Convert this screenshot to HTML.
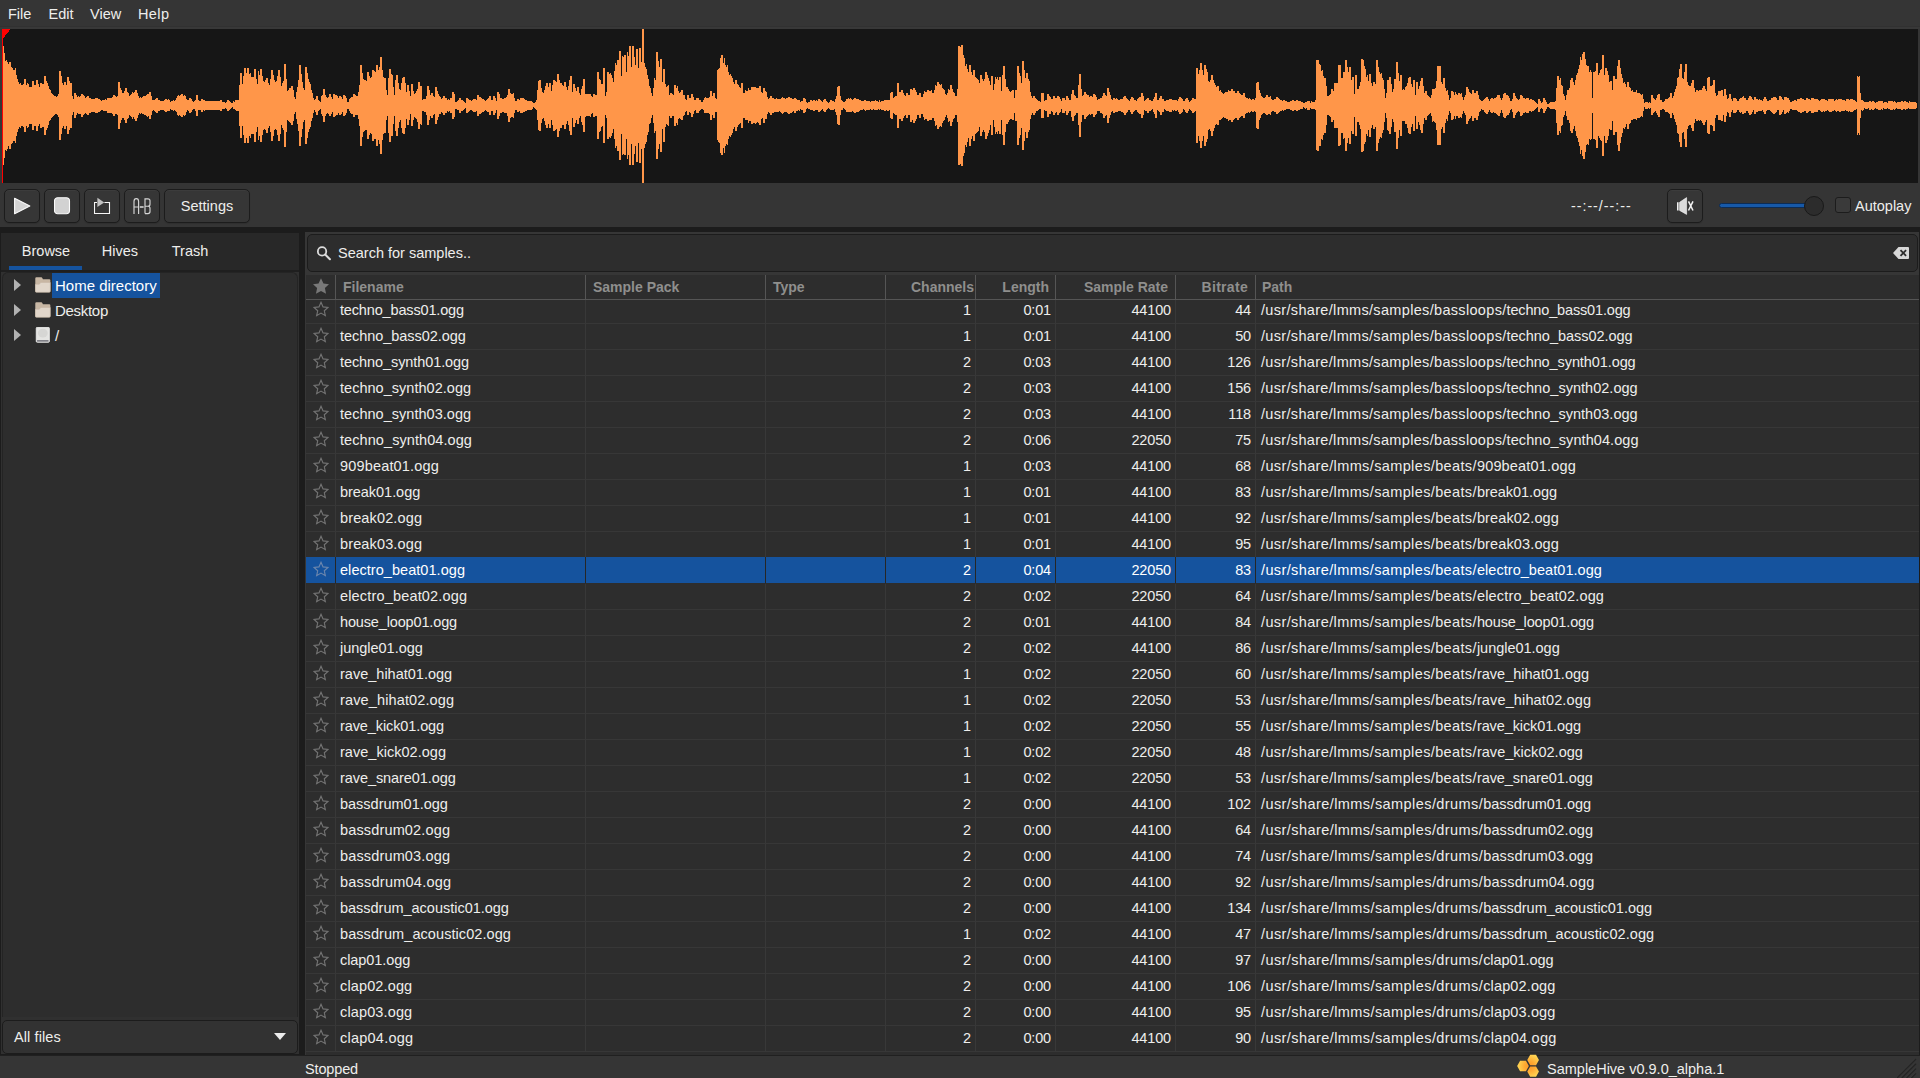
<!DOCTYPE html>
<html lang="en"><head><meta charset="utf-8"><title>SampleHive</title>
<style>
*{box-sizing:border-box;margin:0;padding:0}
html,body{width:1920px;height:1078px;overflow:hidden;background:#353535}
body{position:relative;font-family:"Liberation Sans",sans-serif;font-size:14.200px;color:#eeeeec;line-height:1}
#menubar{position:absolute;left:0;top:0;width:1920px;height:29px;background:#353535}
#menubar b{position:absolute;left:0;top:26px;width:1920px;height:3px;background:#383838;border-top:1px solid #313131}
#menubar span{position:absolute;top:6px;font-size:14.500px;line-height:16px;white-space:nowrap}
#wave{position:absolute;left:2px;top:29px;width:1916px;height:154px;background:#161616;overflow:hidden}
#wave svg{position:absolute;left:0;top:0}
#toolbar{position:absolute;left:0;top:183px;width:1920px;height:44px;background:#353535}
.btn{position:absolute;top:6px;height:34px;border:1px solid #1c1c1c;border-radius:5px;background:#363636;box-shadow:inset 0 1px rgba(255,255,255,0.03),0 1px 1px rgba(0,0,0,0.12)}
.btn svg{position:absolute;left:9px;top:7px}
.btn.txt span{position:absolute;left:0;right:0;top:8px;text-align:center;line-height:16px;font-size:14.500px}
#time{position:absolute;left:1571px;top:15px;line-height:16px;letter-spacing:1px;white-space:nowrap}
#track{position:absolute;left:1719px;top:20px;width:90px;height:5px;border:1px solid #0c2c55;border-radius:3px;background:#1759a8}
#knob{position:absolute;left:1804px;top:13px;width:20px;height:20px;border-radius:50%;border:1px solid #191919;background:#2c2c2c}
#chk{position:absolute;left:1835px;top:14px;width:16px;height:16px;border:1px solid #1c1c1c;border-radius:3px;background:#3a3a3a}
#auto{position:absolute;left:1855px;top:15px;line-height:16px;font-size:14.500px;white-space:nowrap}
#gap{position:absolute;left:0;top:227px;width:1920px;height:828px;background:#1c1c1c}
#left{position:absolute;left:1px;top:233px;width:298px;height:821px;background:#303030}
#tabs{position:absolute;left:0;top:0;width:298px;height:39px;background:#282828;border-bottom:2px solid #1f1f1f}
.tab{position:absolute;top:10px;line-height:16px;text-align:center;font-size:14.500px}
#ul{position:absolute;left:8px;top:33px;width:73px;height:4px;background:#15539e}
#tree{position:absolute;left:1px;top:39px;width:296px;height:745px;background:#2d2d2d;border:1px solid #242424;border-bottom:none;border-radius:6px 6px 0 0}
.ti{position:absolute;left:0;height:25px;width:294px}
.tri{position:absolute;left:11px;top:6px;width:0;height:0;border-left:7px solid #b2b2b2;border-top:6.500px solid transparent;border-bottom:6.500px solid transparent}
.fi{position:absolute;left:32px;top:4px;width:16px;height:16px}
.tl{position:absolute;left:49px;top:0px;height:25px;line-height:26px;padding:0 3px 0 3px;font-size:15px;letter-spacing:0;white-space:nowrap}
.selt{background:#15539e;color:#fff}
#combo{position:absolute;left:1px;top:787px;width:296px;height:34px;border:1px solid #1c1c1c;border-radius:5px;background:#323232}
#combo span{position:absolute;left:11px;top:8px;line-height:16px;font-size:14.500px;letter-spacing:0.100px}
#combo i{position:absolute;left:271px;top:12px;width:0;height:0;border-top:7px solid #ececec;border-left:6.500px solid transparent;border-right:6.500px solid transparent}
#right{position:absolute;left:305px;top:232px;width:1614px;height:823px;background:#363636}
#search{position:absolute;left:2px;top:2px;width:1611px;height:38px;border:1px solid #1c1c1c;border-radius:5px;background:#2d2d2d}
#search svg{position:absolute;left:8px;top:11px}
#search span{position:absolute;left:30px;top:10px;line-height:16px;font-size:14.500px;white-space:nowrap}
#search #clr{left:1585px;top:12px}
#table{position:absolute;left:1px;top:43px;width:1613px;height:780px;background:#2d2d2d;overflow:hidden}
#thead{position:absolute;left:0;top:0;width:1613px;height:25px;background:#2d2d2d;border-bottom:1px solid #555}
.h{position:absolute;top:0;height:24px;line-height:25px;font-weight:bold;color:#8f8f8d;font-size:14px;border-right:1px solid #555;padding:0 7px;white-space:nowrap}
.row{position:absolute;left:0;width:1613px;height:26px;border-bottom:1px solid #373737}
.c{position:absolute;top:0;height:25px;line-height:24px;padding:0 4px;white-space:nowrap;border-right:1px solid #383838;font-size:14.500px;letter-spacing:-0.150px}
.c i{font-style:normal;letter-spacing:0.340px}
.r{text-align:right}
.c0{left:0;width:30px;padding:0}.c1{left:30px;width:250px}.c2{left:280px;width:180px}.c3{left:460px;width:120px}.c4{left:580px;width:90px}.c5{left:670px;width:80px}.c6{left:750px;width:120px}.c7{left:870px;width:80px}.c8{left:950px;width:663px;border-right:none;padding-left:5px}
.h.c8{border-right:none;padding-left:6px}
.st{position:absolute;left:7px;top:3px;width:16px;height:16px}
.row.sel{background:#15539e;color:#fff;border-bottom:none;z-index:2}
.row.sel .c{padding-top:1px;height:26px}
.row.sel .st path{stroke:#6d87ad}
.row.sel .st{top:4px}
.row.sel .c{border-right-color:#262626}
#status{position:absolute;left:0;top:1055px;width:1920px;height:23px;background:#353535;border-top:1px solid #202020}
#stopped{position:absolute;left:305px;top:5px;line-height:16px;font-size:14.500px;letter-spacing:-0.150px}
#logo{position:absolute;left:1515px;top:-2px}
#ver{position:absolute;left:1547px;top:5px;line-height:16px;font-size:14.500px;white-space:nowrap}
#grip{position:absolute;left:1897px;top:2px}

</style></head><body>
<div id="menubar"><b></b><span style="left:8px">File</span><span style="left:48.500px">Edit</span><span style="left:90px">View</span><span style="left:138px;letter-spacing:0.400px">Help</span></div>
<div id="wave"><svg width="1916" height="154" viewBox="0 0 1916 154" shape-rendering="crispEdges"><path d="M1 17H2V24H3V32H4V31H5V33H6V35H7V33H9V38H10V39H11V41H13V39H14V46H15V50H16V53H17V55H18V54H19V56H21V55H22V50H24V56H25V54H26V55H27V58H30V52H32V56H34V51H36V55H37V58H38V54H40V55H42V47H44V52H45V54H46V57H47V60H48V61H49V64H50V65H51V66H52V67H54V68H55V67H56V65H57V42H59V47H60V54H61V56H62V53H64V56H65V48H67V52H68V54H70V67H71V70H72V64H74V66H75V68H76V67H77V68H78V67H79V65H81V66H82V67H83V69H84V68H85V67H87V69H89V70H93V69H96V70H98V71H99V72H100V71H103V70H104V71H105V69H110V68H111V66H113V67H114V68H115V67H116V53H118V59H119V61H120V64H122V62H123V59H125V63H126V64H127V67H128V66H129V65H130V63H131V64H132V63H133V61H135V64H136V67H137V69H138V68H139V69H140V68H141V67H144V66H145V65H147V63H149V67H150V71H153V70H154V69H156V71H158V72H162V71H163V70H165V71H166V70H167V71H168V73H169V72H171V71H172V72H173V71H174V69H175V67H176V66H177V67H178V66H179V65H181V67H182V66H183V67H184V70H185V71H187V69H189V70H190V72H191V73H192V72H193V71H194V66H196V71H197V72H199V70H201V71H203V72H218V71H220V73H223V74H224V73H225V71H227V72H228V73H229V74H231V72H232V73H233V71H237V56H238V44H240V55H241V47H242V39H244V44H245V39H247V45H248V44H249V48H252V40H254V50H255V55H256V42H257V46H258V40H260V47H261V52H262V53H263V51H264V49H266V54H267V56H268V50H269V41H271V46H272V51H273V53H274V52H275V47H276V41H278V48H279V57H280V54H281V52H282V35H284V50H285V62H286V61H287V59H289V57H291V61H292V68H293V70H294V63H295V58H296V51H297V36H299V45H300V53H301V59H302V61H303V38H305V44H306V50H307V53H308V55H309V61H310V64H311V69H312V71H313V70H314V67H316V71H317V72H318V73H319V67H320V66H321V60H323V66H324V68H325V69H326V68H327V65H329V68H330V70H331V65H333V66H335V67H336V69H337V67H339V68H340V70H341V66H343V67H344V69H345V73H347V70H348V69H349V68H351V65H353V66H354V67H356V63H357V56H358V36H360V44H361V50H362V51H364V52H365V43H367V47H368V49H369V48H370V41H372V42H373V43H374V36H376V41H377V38H378V28H380V41H381V48H382V49H384V61H385V66H386V49H387V40H389V45H390V46H391V58H392V66H393V51H394V46H396V54H397V60H398V61H399V54H400V49H401V48H403V54H404V63H405V56H407V62H408V67H409V55H411V62H412V65H413V64H414V62H415V60H416V53H418V57H420V71H421V70H424V67H425V57H427V61H428V66H429V64H431V67H432V68H433V58H435V62H436V65H437V67H438V68H439V70H440V69H441V67H443V69H445V71H446V70H447V71H448V69H450V63H452V65H453V73H455V72H456V71H457V69H459V71H461V72H462V73H463V74H464V69H466V70H467V71H469V72H470V71H471V70H474V71H475V66H477V68H479V69H480V70H482V71H483V72H484V71H485V70H486V69H487V67H489V71H491V67H493V69H494V72H495V63H497V65H498V69H500V70H502V69H504V68H505V66H506V60H508V64H509V65H511V64H512V69H513V72H515V70H517V71H518V69H522V70H523V71H525V72H530V73H531V74H533V73H534V71H535V61H536V52H537V51H539V59H540V63H541V64H542V61H543V57H544V54H546V58H547V54H549V62H550V56H551V51H553V52H554V53H555V45H557V51H558V54H560V56H561V57H562V53H564V58H565V61H566V57H567V51H568V47H570V63H571V55H573V59H574V62H575V58H577V64H578V66H579V60H580V57H581V50H583V65H589V67H590V68H591V65H593V66H595V43H597V50H598V51H599V55H601V39H603V67H604V63H605V43H607V45H608V44H609V46H610V49H611V53H612V42H613V34H614V36H615V31H617V22H619V47H620V27H621V28H622V26H624V43H625V23H626V27H627V17H629V38H630V17H632V28H633V36H634V20H636V39H637V19H639V33H640V0H642V34H643V38H644V40H645V46H646V50H647V57H648V59H649V64H650V67H651V59H652V49H653V51H654V23H656V32H657V38H658V30H660V53H661V40H663V55H664V58H665V57H666V56H667V66H668V64H670V65H671V66H672V56H674V59H675V57H676V62H677V64H678V63H679V61H681V66H683V70H684V71H685V66H687V69H689V65H691V68H692V71H694V69H697V71H699V73H701V71H702V69H703V68H704V69H707V68H708V62H710V67H711V64H713V69H714V70H715V41H716V40H717V39H718V29H719V26H721V34H722V29H723V36H724V38H725V36H726V43H727V46H728V45H729V47H730V49H731V53H732V55H733V51H735V55H736V56H737V58H738V59H739V54H741V64H743V61H744V62H746V59H747V61H749V58H754V59H757V57H759V63H760V64H761V59H763V62H764V63H765V68H766V70H767V69H768V67H770V69H772V70H774V69H775V70H779V69H780V68H781V69H783V70H784V69H786V68H788V69H790V70H792V69H794V70H795V71H798V73H799V72H801V69H803V70H804V73H805V74H806V73H808V71H810V72H811V71H813V72H814V71H815V72H816V70H818V71H819V72H820V73H821V71H822V70H824V72H825V73H826V74H827V73H828V71H830V72H832V73H833V70H834V67H835V58H836V57H838V67H839V71H840V72H841V73H843V72H844V70H846V69H847V70H848V69H849V70H850V71H851V70H852V69H854V70H857V71H859V72H862V71H864V72H868V73H869V72H873V71H874V72H876V73H877V71H878V73H879V72H882V71H888V64H889V63H891V69H892V68H893V67H895V54H897V63H899V61H901V64H902V66H903V67H904V64H906V66H908V60H910V61H911V59H913V61H914V63H915V66H917V64H919V68H921V65H922V62H923V63H925V61H927V62H929V61H930V64H932V61H933V56H934V57H935V53H937V55H938V56H939V55H940V59H941V60H942V61H943V65H944V66H945V64H946V60H947V61H948V56H950V60H951V63H952V64H953V67H955V60H956V17H958V18H959V16H961V26H962V29H963V37H964V35H965V40H966V43H967V36H969V43H970V46H971V41H973V48H974V49H975V50H976V51H977V54H978V46H980V50H981V52H982V50H983V43H985V46H986V49H987V52H988V56H989V47H991V61H992V55H993V48H994V50H995V48H996V51H997V48H999V62H1000V46H1001V37H1003V50H1004V58H1006V60H1007V62H1008V63H1009V62H1010V61H1012V69H1013V61H1015V37H1017V44H1018V47H1019V54H1020V32H1022V41H1023V49H1024V44H1026V50H1027V52H1028V63H1029V67H1030V69H1031V67H1033V69H1034V70H1035V71H1036V72H1038V73H1039V64H1042V72H1043V71H1045V65H1047V67H1048V68H1049V70H1051V67H1053V69H1055V67H1057V68H1058V70H1059V72H1060V69H1063V71H1064V67H1066V69H1067V71H1069V65H1070V61H1072V66H1073V67H1074V69H1076V56H1077V45H1079V60H1080V67H1081V66H1082V63H1084V65H1085V66H1087V68H1088V67H1090V68H1091V65H1093V66H1094V68H1095V71H1096V70H1098V69H1100V67H1101V64H1103V66H1104V67H1105V59H1107V63H1108V66H1109V70H1110V71H1111V69H1113V70H1114V69H1115V70H1116V71H1118V70H1121V68H1122V67H1124V69H1125V70H1126V71H1127V72H1128V70H1129V68H1131V69H1132V71H1134V72H1135V70H1136V69H1137V68H1139V64H1141V67H1142V72H1143V71H1144V70H1145V69H1147V71H1149V72H1151V70H1152V68H1153V64H1155V71H1157V69H1158V67H1160V70H1162V72H1164V71H1167V70H1170V71H1175V72H1176V70H1177V68H1179V69H1180V70H1181V72H1183V70H1184V69H1186V71H1187V73H1188V72H1189V71H1190V69H1192V70H1194V39H1196V45H1197V41H1198V34H1200V41H1201V46H1202V36H1204V40H1205V43H1206V52H1207V53H1208V51H1209V46H1211V51H1212V54H1213V56H1214V58H1215V57H1217V62H1218V61H1219V63H1220V64H1221V65H1222V64H1223V63H1226V61H1227V62H1229V60H1231V62H1233V64H1235V62H1237V64H1238V65H1239V66H1241V64H1243V68H1244V69H1246V70H1247V69H1248V70H1249V71H1250V70H1252V71H1253V69H1254V54H1255V53H1257V61H1258V64H1259V67H1260V68H1261V69H1263V68H1264V66H1266V68H1268V67H1269V70H1270V71H1272V70H1274V68H1276V69H1277V70H1278V71H1280V72H1281V71H1283V72H1285V73H1288V72H1290V71H1292V72H1294V71H1296V72H1299V73H1301V74H1303V73H1305V72H1308V74H1309V72H1310V73H1313V71H1314V31H1317V35H1318V36H1319V42H1320V41H1321V47H1322V49H1324V57H1325V67H1327V66H1328V65H1329V60H1331V62H1332V54H1336V36H1339V49H1341V43H1343V31H1345V38H1346V43H1347V38H1349V51H1350V48H1352V65H1353V46H1355V60H1357V57H1358V53H1359V30H1361V31H1362V37H1363V40H1364V48H1365V46H1366V52H1367V45H1369V54H1370V57H1371V53H1373V55H1374V31H1376V38H1377V43H1378V45H1379V44H1380V49H1381V51H1382V60H1383V69H1384V64H1385V51H1387V48H1389V55H1390V63H1391V60H1392V50H1394V33H1396V44H1397V52H1398V46H1400V61H1401V60H1402V61H1403V58H1404V57H1405V54H1406V49H1407V48H1409V55H1410V58H1411V51H1413V66H1414V53H1416V60H1417V57H1418V52H1419V49H1421V57H1422V64H1423V62H1425V66H1426V67H1427V68H1428V69H1429V66H1430V60H1433V59H1434V52H1435V37H1439V53H1440V55H1441V49H1443V59H1444V62H1445V61H1446V66H1447V71H1448V69H1449V62H1451V63H1452V66H1453V63H1454V65H1455V66H1456V64H1458V65H1459V64H1460V68H1461V71H1462V68H1463V66H1464V58H1466V60H1467V63H1468V64H1469V65H1470V61H1472V64H1474V62H1476V66H1477V70H1478V71H1479V72H1481V71H1482V70H1483V69H1484V68H1486V70H1487V72H1488V70H1489V69H1491V70H1492V69H1494V68H1495V66H1498V69H1499V71H1500V69H1501V65H1502V64H1504V66H1506V67H1507V69H1508V72H1510V70H1511V64H1513V67H1514V69H1515V70H1516V71H1517V70H1518V66H1520V67H1521V69H1523V70H1524V69H1527V71H1528V70H1530V71H1532V72H1533V73H1534V74H1535V75H1536V70H1538V72H1539V74H1540V73H1541V69H1543V71H1544V73H1545V75H1547V74H1548V73H1553V72H1554V59H1555V47H1557V51H1558V49H1559V56H1560V57H1561V65H1562V67H1563V71H1564V66H1565V61H1567V59H1568V51H1569V49H1571V53H1572V56H1573V51H1574V46H1575V44H1576V40H1577V36H1578V28H1579V31H1580V25H1581V23H1583V30H1584V36H1585V37H1587V43H1588V41H1589V43H1590V69H1591V43H1593V42H1594V34H1596V46H1597V44H1598V41H1599V40H1600V26H1602V46H1603V39H1605V42H1606V46H1607V53H1608V52H1610V61H1611V47H1613V50H1615V37H1616V31H1618V39H1619V45H1620V49H1621V54H1622V53H1623V55H1624V58H1625V53H1627V58H1628V59H1629V62H1630V61H1631V63H1634V61H1635V64H1638V65H1639V66H1640V65H1641V70H1642V74H1643V73H1646V74H1647V73H1648V74H1649V66H1651V69H1652V70H1653V71H1654V69H1655V66H1656V65H1658V71H1660V73H1662V72H1663V70H1666V69H1667V68H1668V64H1670V69H1671V67H1672V63H1673V60H1674V57H1675V49H1676V48H1677V40H1678V35H1680V49H1681V50H1682V43H1683V35H1685V53H1686V56H1687V57H1689V54H1690V51H1692V59H1693V63H1694V61H1696V62H1697V61H1700V59H1701V57H1703V60H1704V62H1705V49H1706V48H1708V57H1710V56H1711V51H1713V64H1714V67H1715V66H1716V62H1719V61H1721V67H1722V60H1724V66H1725V70H1726V69H1727V65H1729V70H1730V72H1731V69H1734V70H1735V72H1737V70H1738V69H1740V68H1741V67H1742V69H1744V71H1746V69H1747V67H1749V68H1750V70H1751V71H1752V68H1754V70H1756V71H1757V70H1758V71H1760V72H1761V70H1762V68H1764V70H1765V72H1767V71H1769V69H1771V68H1774V69H1775V71H1777V67H1779V68H1780V70H1781V71H1782V68H1785V69H1787V71H1788V73H1790V72H1792V71H1794V72H1795V70H1798V69H1800V70H1802V71H1804V69H1806V70H1808V71H1809V69H1812V70H1816V71H1817V72H1818V71H1819V70H1823V71H1825V72H1826V70H1832V72H1833V71H1834V70H1835V71H1836V70H1840V71H1843V72H1844V70H1847V71H1848V70H1851V71H1853V72H1854V73H1855V47H1856V48H1857V47H1858V64H1859V71H1861V72H1862V73H1867V72H1869V73H1870V72H1872V73H1873V74H1874V73H1876V72H1881V74H1882V73H1885V74H1886V72H1891V73H1892V72H1893V73H1894V74H1895V73H1899V72H1901V73H1902V72H1904V73H1906V74H1907V72H1908V73H1914V74H1915V79H1914V80H1907V79H1906V80H1904V81H1903V80H1901V81H1899V80H1895V79H1894V80H1893V81H1892V80H1891V81H1888V80H1886V79H1885V80H1882V79H1881V81H1880V80H1879V81H1876V80H1874V79H1873V80H1872V81H1870V80H1869V81H1867V79H1866V80H1863V79H1862V81H1861V82H1860V81H1859V89H1858V106H1857V104H1856V106H1855V80H1854V81H1852V82H1851V83H1848V82H1847V83H1846V82H1844V81H1843V82H1839V83H1837V82H1835V83H1834V82H1833V81H1832V82H1830V83H1827V82H1826V81H1825V82H1823V83H1822V82H1821V83H1819V82H1818V81H1816V83H1812V84H1809V82H1807V83H1806V84H1804V82H1802V83H1800V84H1798V83H1796V82H1795V81H1790V80H1788V82H1787V84H1786V83H1785V84H1784V85H1782V81H1781V83H1780V85H1779V86H1777V81H1775V83H1774V84H1773V85H1771V84H1770V83H1769V82H1768V81H1765V82H1764V85H1762V83H1761V81H1760V82H1756V83H1754V85H1752V81H1751V83H1750V85H1749V86H1747V84H1746V82H1744V84H1742V85H1740V83H1739V84H1738V83H1737V81H1735V83H1734V84H1731V81H1730V83H1729V88H1727V84H1726V83H1725V87H1724V93H1722V86H1721V92H1719V91H1716V86H1714V89H1713V102H1711V97H1710V96H1708V105H1706V104H1705V91H1704V93H1703V96H1701V94H1700V92H1699V91H1698V92H1697V91H1696V92H1694V90H1693V94H1692V102H1690V99H1689V96H1687V97H1686V100H1685V118H1683V110H1682V103H1681V104H1680V118H1678V113H1677V105H1676V104H1675V96H1674V93H1673V90H1672V86H1671V84H1670V89H1668V85H1667V84H1666V83H1663V81H1662V80H1660V81H1658V88H1656V86H1655V84H1654V82H1653V83H1652V84H1651V86H1649V79H1648V80H1647V79H1646V80H1643V78H1642V82H1641V88H1640V87H1639V88H1638V89H1635V91H1634V90H1631V91H1629V94H1628V95H1627V100H1625V95H1624V98H1623V100H1622V99H1621V104H1620V108H1619V114H1618V122H1616V116H1615V103H1613V106H1611V92H1610V101H1608V100H1607V107H1606V111H1605V114H1603V107H1602V127H1600V112H1599V111H1598V109H1597V107H1596V119H1594V111H1593V110H1591V84H1590V110H1589V111H1588V110H1587V116H1586V115H1585V116H1584V123H1583V130H1581V127H1580V121H1579V125H1578V117H1577V113H1576V109H1575V107H1574V102H1573V97H1572V100H1571V104H1569V102H1568V94H1567V91H1565V87H1564V82H1563V86H1562V88H1561V96H1560V97H1559V104H1558V102H1557V106H1555V94H1554V81H1553V80H1548V79H1547V78H1545V80H1544V82H1543V84H1541V80H1540V79H1539V80H1538V83H1536V78H1535V79H1534V80H1533V81H1532V82H1530V83H1529V82H1527V84H1524V83H1523V84H1521V86H1520V87H1518V83H1517V82H1516V83H1515V84H1514V86H1513V89H1511V83H1510V80H1509V81H1508V84H1507V86H1505V87H1504V89H1502V88H1501V84H1500V81H1499V84H1498V87H1496V86H1495V85H1494V84H1492V83H1491V84H1489V83H1488V81H1487V83H1486V85H1484V84H1483V83H1482V81H1480V80H1479V82H1478V83H1477V87H1476V91H1474V89H1472V92H1470V87H1469V89H1468V90H1467V92H1466V95H1464V86H1463V84H1462V82H1461V85H1460V89H1459V88H1458V89H1456V87H1454V90H1453V87H1452V90H1451V91H1449V84H1448V82H1447V86H1446V92H1445V90H1444V94H1443V104H1441V98H1440V100H1439V116H1435V101H1434V94H1433V93H1432V92H1431V93H1430V87H1429V84H1428V85H1427V86H1426V87H1425V91H1423V89H1422V95H1421V104H1419V101H1418V96H1417V93H1416V100H1414V87H1413V102H1411V95H1410V98H1409V105H1407V104H1406V99H1405V95H1403V92H1400V107H1398V101H1397V109H1396V120H1394V103H1392V93H1391V90H1390V98H1389V105H1387V102H1386V101H1385V89H1384V84H1383V93H1382V101H1381V104H1380V109H1379V108H1378V110H1377V114H1376V122H1374V98H1373V100H1371V96H1370V99H1369V108H1367V101H1366V107H1365V105H1364V113H1363V115H1362V122H1361V123H1359V100H1358V96H1357V93H1355V107H1353V88H1352V105H1350V102H1349V115H1347V109H1346V114H1345V122H1343V109H1342V110H1341V104H1339V116H1338V117H1336V99H1332V91H1331V93H1329V88H1328V87H1327V86H1325V96H1324V104H1322V106H1321V111H1320V110H1319V117H1317V122H1315V121H1314V81H1313V80H1309V79H1308V81H1305V79H1304V80H1303V79H1302V78H1301V80H1298V81H1296V82H1294V81H1292V82H1290V81H1288V80H1284V81H1282V82H1281V81H1280V82H1278V83H1277V84H1276V85H1274V83H1272V82H1270V83H1269V86H1268V85H1266V86H1264V85H1263V84H1261V85H1260V86H1259V89H1258V91H1257V100H1255V99H1254V83H1253V82H1252V83H1250V82H1249V83H1248V84H1247V83H1246V84H1244V85H1243V89H1241V87H1239V88H1238V89H1237V91H1235V89H1233V90H1232V91H1231V93H1229V91H1227V92H1226V90H1224V89H1222V88H1221V89H1220V90H1219V91H1217V96H1215V95H1214V96H1213V99H1212V102H1211V107H1209V102H1208V100H1207V101H1206V110H1205V113H1204V117H1202V107H1201V112H1200V119H1198V112H1197V107H1196V114H1194V82H1193V83H1192V84H1190V82H1189V81H1188V80H1187V82H1186V84H1184V83H1183V81H1182V80H1181V83H1180V84H1179V85H1177V83H1176V81H1175V82H1173V81H1172V82H1171V81H1170V83H1167V82H1164V81H1163V80H1162V83H1160V86H1158V83H1157V82H1156V81H1155V89H1153V85H1152V83H1151V80H1150V81H1149V82H1147V84H1145V82H1143V81H1142V86H1141V89H1139V85H1137V84H1136V83H1135V81H1133V82H1132V83H1131V85H1129V83H1128V81H1126V83H1125V84H1124V86H1122V84H1121V83H1119V82H1116V83H1113V84H1111V82H1110V83H1109V86H1108V89H1107V94H1105V86H1104V87H1103V89H1101V85H1100V84H1098V82H1095V85H1094V86H1093V88H1091V85H1089V86H1088V85H1087V86H1086V87H1085V88H1084V90H1082V86H1080V93H1079V108H1077V96H1076V84H1074V86H1073V87H1072V92H1070V88H1069V82H1067V84H1066V86H1064V82H1063V84H1060V80H1059V83H1058V84H1057V86H1055V83H1054V84H1053V86H1051V83H1050V82H1049V85H1047V88H1045V82H1043V81H1042V89H1039V80H1037V81H1036V82H1034V84H1033V86H1031V84H1030V86H1029V90H1028V101H1027V103H1026V109H1024V103H1023V112H1022V121H1020V99H1019V106H1018V109H1017V116H1015V92H1013V84H1012V91H1010V90H1008V91H1007V93H1006V95H1004V103H1003V116H1001V106H1000V91H999V105H997V102H996V105H995V103H994V105H993V98H992V91H991V106H989V96H988V101H987V104H986V107H985V110H983V103H982V101H981V103H980V107H978V98H977V102H976V103H975V104H974V105H973V112H971V107H970V110H969V117H967V109H966V113H965V118H964V116H963V124H962V127H961V137H959V135H958V136H956V93H955V86H953V89H952V90H951V93H950V97H948V92H947V93H946V89H945V86H944V88H943V91H942V92H941V94H940V98H939V97H938V98H937V100H935V96H934V97H933V92H932V89H930V91H927V92H925V90H923V91H922V88H921V85H919V89H917V86H915V90H914V92H913V94H911V91H910V93H908V86H906V89H904V86H903V87H902V89H901V92H899V90H897V99H895V86H893V85H892V84H891V90H889V89H888V81H887V82H885V81H884V82H882V81H879V80H878V81H877V80H876V81H872V80H871V81H869V80H868V81H864V82H863V81H862V80H861V81H858V82H857V83H854V84H852V83H851V82H850V83H844V81H843V80H842V79H841V81H839V86H838V96H836V95H835V86H834V83H833V80H832V81H828V80H827V79H826V80H825V81H824V83H822V82H821V80H820V81H819V82H818V83H816V81H813V82H811V81H808V80H806V79H805V80H804V83H803V84H801V81H799V80H798V82H797V81H796V82H794V84H792V82H791V83H790V84H788V85H786V84H785V83H782V84H781V85H780V84H779V83H778V82H777V83H772V84H770V86H768V84H767V83H766V85H765V90H763V94H761V89H760V90H759V96H757V94H756V93H755V94H754V95H753V94H751V95H749V92H747V94H746V91H743V89H741V99H739V94H738V95H737V96H736V98H735V102H733V98H732V100H731V104H730V106H729V108H728V107H727V110H726V116H725V115H724V117H723V124H722V119H721V126H719V124H718V114H717V113H716V111H715V83H713V89H711V86H710V91H708V85H707V84H702V81H701V80H699V81H698V82H697V84H694V81H693V82H692V85H691V88H689V84H688V83H687V86H685V82H684V83H683V86H682V87H681V91H679V90H678V89H677V90H676V96H675V94H674V97H672V87H670V89H668V87H667V97H666V96H665V95H664V98H663V113H661V100H660V123H658V115H657V120H656V130H654V102H653V104H652V94H651V86H650V89H649V94H648V95H647V103H646V106H645V113H644V115H643V119H642V154H640V120H639V134H637V114H636V133H634V117H633V125H632V136H630V115H629V136H627V126H626V130H625V110H624V126H622V125H621V126H620V105H619V131H617V122H615V117H614V119H613V110H612V100H611V104H610V107H609V109H608V108H607V110H605V89H604V86H603V114H601V97H600V98H599V102H598V103H597V110H595V87H593V88H591V84H590V85H589V88H588V87H584V88H583V103H581V96H580V93H579V87H578V89H577V95H575V91H574V94H573V98H571V89H570V106H568V102H567V96H566V92H565V95H564V100H562V96H560V99H558V102H557V108H555V100H554V101H553V102H551V96H550V91H549V99H547V95H546V99H544V96H543V92H542V89H541V90H540V94H539V102H537V101H536V91H535V81H534V80H533V79H532V78H531V80H530V81H525V82H523V83H521V84H518V82H517V83H515V81H513V84H512V89H511V88H509V89H508V93H506V87H505V84H502V83H500V84H498V87H497V90H495V81H494V84H493V86H491V82H489V86H487V83H485V82H484V81H483V82H482V83H480V84H479V85H477V87H475V82H474V83H471V82H470V81H468V82H467V83H466V84H464V79H463V80H462V81H461V82H459V84H457V81H455V80H453V88H452V90H450V84H448V82H447V83H446V82H445V84H443V86H441V84H440V83H439V85H437V88H436V91H435V95H433V85H432V86H431V89H429V87H428V91H427V96H425V86H424V83H422V82H420V96H419V95H418V100H416V93H415V90H414V89H413V88H412V91H411V97H409V85H408V91H407V96H405V90H404V99H403V105H401V104H400V99H399V91H398V93H397V99H396V107H394V102H393V87H392V95H391V107H389V113H387V104H386V87H385V91H384V104H382V105H381V111H380V125H378V115H377V111H376V117H374V110H372V112H370V105H369V104H368V106H367V110H365V101H363V102H362V103H361V108H360V117H358V97H357V90H356V86H353V88H351V85H349V84H348V82H347V80H345V84H344V86H343V87H341V83H340V85H339V86H337V84H336V86H334V87H333V88H331V83H330V85H329V87H327V85H326V84H325V85H324V87H323V93H321V87H320V85H319V80H318V81H317V82H316V86H314V83H313V81H312V84H311V89H310V92H309V98H308V100H307V103H306V109H305V115H303V91H302V93H301V100H300V108H299V117H297V102H296V95H295V90H294V83H293V85H292V92H291V96H289V94H288V93H287V92H286V91H285V103H284V118H282V101H281V99H280V96H279V105H278V112H276V106H275V101H274V100H273V101H272V107H271V112H269V103H268V97H267V99H266V104H264V101H263V100H262V101H261V106H260V113H258V107H257V111H256V98H255V103H254V113H252V105H249V109H248V107H247V114H245V109H244V114H242V106H241V97H240V109H238V97H237V82H234V81H233V80H231V78H230V79H229V80H228V81H227V82H225V80H224V79H223V80H220V82H218V81H203V82H202V81H201V83H199V81H196V87H194V82H193V80H191V81H190V83H189V84H187V82H186V81H185V83H184V86H183V87H182V86H181V88H179V87H178V86H177V87H176V86H175V83H174V82H173V81H172V82H171V81H169V80H168V82H165V83H163V82H162V81H158V82H156V84H154V83H153V82H152V81H151V82H150V86H149V90H147V87H146V88H145V87H144V86H142V85H140V84H139V85H138V84H137V86H136V89H135V92H133V90H132V88H131V90H130V88H129V87H128V86H127V89H126V90H125V94H123V91H122V89H120V91H119V94H118V100H116V86H115V85H113V87H111V85H110V84H105V82H101V81H99V82H98V83H96V84H93V83H89V84H87V86H85V85H84V84H83V85H82V86H81V88H79V85H76V84H75V86H74V89H72V83H71V86H70V99H68V101H67V105H65V97H64V100H62V97H61V99H60V105H59V111H57V88H56V86H55V85H53V86H52V87H51V88H50V89H49V91H48V92H47V96H46V99H45V101H44V106H42V98H40V99H38V95H37V97H36V102H34V97H32V101H30V95H27V98H26V99H25V97H24V103H22V98H21V97H19V99H18V98H17V100H16V103H15V107H14V114H13V112H11V114H10V115H9V120H7V117H6V120H5V122H4V121H3V129H2V136H1Z" fill="#ff9649"/><path d="M0 0H8.500L1 9.500V154H0Z" fill="#ff0000"/></svg></div>
<div id="toolbar">
  <div class="btn" style="left:4px;width:36px"><svg viewBox="0 0 17 18" width="17" height="18"><path d="M0.600 1.300L15.800 9L0.600 16.700Z" fill="#d3d3d3" stroke="#fbfbfb" stroke-width="1.100" stroke-linejoin="round"/></svg></div>
  <div class="btn" style="left:44px;width:36px"><svg viewBox="0 0 17 18" width="17" height="18"><rect x="0.500" y="0.700" width="15" height="16" rx="3.200" fill="#d2d2d2" stroke="#fbfbfb" stroke-width="1.100"/></svg></div>
  <div class="btn" style="left:84px;width:36px"><svg viewBox="0 0 17 18" width="17" height="18"><path d="M3 5.500H0.500V16.500H15.500V5.500H10.400" fill="none" stroke="#f6f6f6" stroke-width="1.100"/><path d="M3.400 0.800V10L10.200 5.400Z" fill="#c2c2c2"/></svg></div>
  <div class="btn" style="left:124px;width:36px"><svg style="left:8px" viewBox="0 0 18 18" width="18" height="18"><g fill="none" stroke="#d6d6d6" stroke-width="1.150"><path d="M1 17V4.400Q1 1.600 3.300 1.600Q5.600 1.600 5.600 4.400V17M1 10H5.600"/><path d="M6.800 10H10.600" stroke-width="1.600"/><path d="M12 16.600V1.800H14.900Q17 1.800 17 3.800V7.200Q17 9.200 14.900 9.200H12M14.900 9.200Q17 9.200 17 11.200V14.600Q17 16.600 14.900 16.600H12"/></g></svg></div>
  <div class="btn txt" style="left:164px;width:86px"><span>Settings</span></div>
  <div id="time">--:--/--:--</div>
  <div class="btn" style="left:1667px;width:36px"><svg viewBox="0 0 17 18" width="17" height="18"><path d="M0 5.300H1.600V13.400H0z" fill="#f0f0f0"/><path d="M2.600 5.300L9.600 0.600V17.400L2.600 13.400z" fill="#dcdcdc" stroke="#f6f6f6" stroke-width="0.600"/><path d="M11.500 4.300L16 13.500M16 4.300L11.500 13.500" stroke="#f2f2f2" stroke-width="1.500" fill="none"/></svg></div>
  <div id="track"></div><div id="knob"></div>
  <div id="chk"></div><div id="auto">Autoplay</div>
</div>
<div id="gap"></div>
<div id="left">
  <div id="tabs"><span class="tab act" style="left:8px;width:74px">Browse</span><span class="tab" style="left:82px;width:74px">Hives</span><span class="tab" style="left:157px;width:64px">Trash</span><div id="ul"></div></div>
  <div id="tree">
    <div class="ti" style="top:0px"><i class="tri"></i><svg class="fi" viewBox="0 0 17 17"><path d="M0.300 1.500Q0.300 0.300 1.500 0.300H6.600Q7.500 0.300 7.900 1.200L8.400 2.400H15.200Q16.300 2.400 16.300 3.500V15Q16.300 16.200 15.200 16.200H1.400Q0.300 16.200 0.300 15Z" fill="#c8b7a4"/><path d="M0.300 7.700H4.600L6.100 5.800H16.300V15Q16.300 16.300 15.200 16.300H1.400Q0.300 16.300 0.300 15Z" fill="#e1d6ca" stroke="#c3b2a0" stroke-width="0.500"/></svg><span class="tl selt">Home directory</span></div>
    <div class="ti" style="top:25px"><i class="tri"></i><svg class="fi" viewBox="0 0 17 17"><path d="M0.300 1.500Q0.300 0.300 1.500 0.300H6.600Q7.500 0.300 7.900 1.200L8.400 2.400H15.200Q16.300 2.400 16.300 3.500V15Q16.300 16.200 15.200 16.200H1.400Q0.300 16.200 0.300 15Z" fill="#c8b7a4"/><path d="M0.300 7.700H4.600L6.100 5.800H16.300V15Q16.300 16.300 15.200 16.300H1.400Q0.300 16.300 0.300 15Z" fill="#e1d6ca" stroke="#c3b2a0" stroke-width="0.500"/></svg><span class="tl" style="letter-spacing:-0.300px">Desktop</span></div>
    <div class="ti" style="top:50px"><i class="tri"></i><svg class="fi" viewBox="0 0 17 17"><rect x="1.300" y="0.300" width="14" height="16" rx="1.200" fill="#e4e4e2" stroke="#f6f6f4" stroke-width="0.800"/><ellipse cx="8.300" cy="6.500" rx="5.200" ry="4.600" fill="#d6d6d4"/><path d="M2.200 14.800H14.400" stroke="#2b2b3a" stroke-width="1"/></svg><span class="tl">/</span></div>
  </div>
  <div id="combo"><span>All files</span><i></i></div>
</div>
<div id="right">
  <div id="search"><svg viewBox="0 0 16 16" width="16" height="16"><circle cx="6.050" cy="5.400" r="4.200" fill="none" stroke="#dcdcdc" stroke-width="1.800"/><path d="M9.200 8.600L13.900 13.200" stroke="#dcdcdc" stroke-width="2.100" stroke-linecap="round"/></svg><span>Search for samples..</span>
  <svg id="clr" viewBox="0 0 16 12" width="16" height="12"><path d="M5.500 0H15q1 0 1 1v10q0 1-1 1H5.500L0 6z" fill="#d8d8d8"/><path d="M7.500 3.200l5.600 5.600M13.100 3.200L7.500 8.800" stroke="#2d2d2d" stroke-width="1.800"/></svg></div>
  <div id="table">
    <div id="rows">
<div class="row" style="top:23px"><div class="c c0"><svg class="st" viewBox="0 0 16 16"><path d="M8 1.3l2.05 4.6 4.95.5-3.7 3.35 1.05 4.9L8 12.1l-4.35 2.55 1.05-4.9L1 6.4l4.95-.5z" fill="none" stroke="#747474" stroke-width="1.150" stroke-linejoin="miter"/></svg></div><div class="c c1" style="letter-spacing:-0.158px">techno_bass01.ogg</div><div class="c c2"></div><div class="c c3"></div><div class="c c4 r">1</div><div class="c c5 r">0:01</div><div class="c c6 r">44100</div><div class="c c7 r">44</div><div class="c c8"><i style="letter-spacing:0.326px">/usr/share/lmms/samples/bassloops/</i><span style="letter-spacing:-0.158px">techno_bass01.ogg</span></div></div>
<div class="row" style="top:49px"><div class="c c0"><svg class="st" viewBox="0 0 16 16"><path d="M8 1.3l2.05 4.6 4.95.5-3.7 3.35 1.05 4.9L8 12.1l-4.35 2.55 1.05-4.9L1 6.4l4.95-.5z" fill="none" stroke="#747474" stroke-width="1.150" stroke-linejoin="miter"/></svg></div><div class="c c1" style="letter-spacing:-0.040px">techno_bass02.ogg</div><div class="c c2"></div><div class="c c3"></div><div class="c c4 r">1</div><div class="c c5 r">0:01</div><div class="c c6 r">44100</div><div class="c c7 r">50</div><div class="c c8"><i style="letter-spacing:0.326px">/usr/share/lmms/samples/bassloops/</i><span style="letter-spacing:-0.040px">techno_bass02.ogg</span></div></div>
<div class="row" style="top:75px"><div class="c c0"><svg class="st" viewBox="0 0 16 16"><path d="M8 1.3l2.05 4.6 4.95.5-3.7 3.35 1.05 4.9L8 12.1l-4.35 2.55 1.05-4.9L1 6.4l4.95-.5z" fill="none" stroke="#747474" stroke-width="1.150" stroke-linejoin="miter"/></svg></div><div class="c c1" style="letter-spacing:-0.089px">techno_synth01.ogg</div><div class="c c2"></div><div class="c c3"></div><div class="c c4 r">2</div><div class="c c5 r">0:03</div><div class="c c6 r">44100</div><div class="c c7 r">126</div><div class="c c8"><i style="letter-spacing:0.326px">/usr/share/lmms/samples/bassloops/</i><span style="letter-spacing:-0.089px">techno_synth01.ogg</span></div></div>
<div class="row" style="top:101px"><div class="c c0"><svg class="st" viewBox="0 0 16 16"><path d="M8 1.3l2.05 4.6 4.95.5-3.7 3.35 1.05 4.9L8 12.1l-4.35 2.55 1.05-4.9L1 6.4l4.95-.5z" fill="none" stroke="#747474" stroke-width="1.150" stroke-linejoin="miter"/></svg></div><div class="c c1" style="letter-spacing:0.027px">techno_synth02.ogg</div><div class="c c2"></div><div class="c c3"></div><div class="c c4 r">2</div><div class="c c5 r">0:03</div><div class="c c6 r">44100</div><div class="c c7 r">156</div><div class="c c8"><i style="letter-spacing:0.326px">/usr/share/lmms/samples/bassloops/</i><span style="letter-spacing:0.027px">techno_synth02.ogg</span></div></div>
<div class="row" style="top:127px"><div class="c c0"><svg class="st" viewBox="0 0 16 16"><path d="M8 1.3l2.05 4.6 4.95.5-3.7 3.35 1.05 4.9L8 12.1l-4.35 2.55 1.05-4.9L1 6.4l4.95-.5z" fill="none" stroke="#747474" stroke-width="1.150" stroke-linejoin="miter"/></svg></div><div class="c c1" style="letter-spacing:0.027px">techno_synth03.ogg</div><div class="c c2"></div><div class="c c3"></div><div class="c c4 r">2</div><div class="c c5 r">0:03</div><div class="c c6 r">44100</div><div class="c c7 r">118</div><div class="c c8"><i style="letter-spacing:0.326px">/usr/share/lmms/samples/bassloops/</i><span style="letter-spacing:0.027px">techno_synth03.ogg</span></div></div>
<div class="row" style="top:153px"><div class="c c0"><svg class="st" viewBox="0 0 16 16"><path d="M8 1.3l2.05 4.6 4.95.5-3.7 3.35 1.05 4.9L8 12.1l-4.35 2.55 1.05-4.9L1 6.4l4.95-.5z" fill="none" stroke="#747474" stroke-width="1.150" stroke-linejoin="miter"/></svg></div><div class="c c1" style="letter-spacing:0.077px">techno_synth04.ogg</div><div class="c c2"></div><div class="c c3"></div><div class="c c4 r">2</div><div class="c c5 r">0:06</div><div class="c c6 r">22050</div><div class="c c7 r">75</div><div class="c c8"><i style="letter-spacing:0.326px">/usr/share/lmms/samples/bassloops/</i><span style="letter-spacing:0.077px">techno_synth04.ogg</span></div></div>
<div class="row" style="top:179px"><div class="c c0"><svg class="st" viewBox="0 0 16 16"><path d="M8 1.3l2.05 4.6 4.95.5-3.7 3.35 1.05 4.9L8 12.1l-4.35 2.55 1.05-4.9L1 6.4l4.95-.5z" fill="none" stroke="#747474" stroke-width="1.150" stroke-linejoin="miter"/></svg></div><div class="c c1" style="letter-spacing:0.172px">909beat01.ogg</div><div class="c c2"></div><div class="c c3"></div><div class="c c4 r">1</div><div class="c c5 r">0:03</div><div class="c c6 r">44100</div><div class="c c7 r">68</div><div class="c c8"><i style="letter-spacing:0.374px">/usr/share/lmms/samples/beats/</i><span style="letter-spacing:0.172px">909beat01.ogg</span></div></div>
<div class="row" style="top:205px"><div class="c c0"><svg class="st" viewBox="0 0 16 16"><path d="M8 1.3l2.05 4.6 4.95.5-3.7 3.35 1.05 4.9L8 12.1l-4.35 2.55 1.05-4.9L1 6.4l4.95-.5z" fill="none" stroke="#747474" stroke-width="1.150" stroke-linejoin="miter"/></svg></div><div class="c c1" style="letter-spacing:-0.039px">break01.ogg</div><div class="c c2"></div><div class="c c3"></div><div class="c c4 r">1</div><div class="c c5 r">0:01</div><div class="c c6 r">44100</div><div class="c c7 r">83</div><div class="c c8"><i style="letter-spacing:0.374px">/usr/share/lmms/samples/beats/</i><span style="letter-spacing:-0.039px">break01.ogg</span></div></div>
<div class="row" style="top:231px"><div class="c c0"><svg class="st" viewBox="0 0 16 16"><path d="M8 1.3l2.05 4.6 4.95.5-3.7 3.35 1.05 4.9L8 12.1l-4.35 2.55 1.05-4.9L1 6.4l4.95-.5z" fill="none" stroke="#747474" stroke-width="1.150" stroke-linejoin="miter"/></svg></div><div class="c c1" style="letter-spacing:0.134px">break02.ogg</div><div class="c c2"></div><div class="c c3"></div><div class="c c4 r">1</div><div class="c c5 r">0:01</div><div class="c c6 r">44100</div><div class="c c7 r">92</div><div class="c c8"><i style="letter-spacing:0.374px">/usr/share/lmms/samples/beats/</i><span style="letter-spacing:0.134px">break02.ogg</span></div></div>
<div class="row" style="top:257px"><div class="c c0"><svg class="st" viewBox="0 0 16 16"><path d="M8 1.3l2.05 4.6 4.95.5-3.7 3.35 1.05 4.9L8 12.1l-4.35 2.55 1.05-4.9L1 6.4l4.95-.5z" fill="none" stroke="#747474" stroke-width="1.150" stroke-linejoin="miter"/></svg></div><div class="c c1" style="letter-spacing:0.134px">break03.ogg</div><div class="c c2"></div><div class="c c3"></div><div class="c c4 r">1</div><div class="c c5 r">0:01</div><div class="c c6 r">44100</div><div class="c c7 r">95</div><div class="c c8"><i style="letter-spacing:0.374px">/usr/share/lmms/samples/beats/</i><span style="letter-spacing:0.134px">break03.ogg</span></div></div>
<div class="row sel" style="top:282px"><div class="c c0"><svg class="st" viewBox="0 0 16 16"><path d="M8 1.3l2.05 4.6 4.95.5-3.7 3.35 1.05 4.9L8 12.1l-4.35 2.55 1.05-4.9L1 6.4l4.95-.5z" fill="none" stroke="#747474" stroke-width="1.150" stroke-linejoin="miter"/></svg></div><div class="c c1" style="letter-spacing:0.047px">electro_beat01.ogg</div><div class="c c2"></div><div class="c c3"></div><div class="c c4 r">2</div><div class="c c5 r">0:04</div><div class="c c6 r">22050</div><div class="c c7 r">83</div><div class="c c8"><i style="letter-spacing:0.374px">/usr/share/lmms/samples/beats/</i><span style="letter-spacing:0.047px">electro_beat01.ogg</span></div></div>
<div class="row" style="top:309px"><div class="c c0"><svg class="st" viewBox="0 0 16 16"><path d="M8 1.3l2.05 4.6 4.95.5-3.7 3.35 1.05 4.9L8 12.1l-4.35 2.55 1.05-4.9L1 6.4l4.95-.5z" fill="none" stroke="#747474" stroke-width="1.150" stroke-linejoin="miter"/></svg></div><div class="c c1" style="letter-spacing:0.169px">electro_beat02.ogg</div><div class="c c2"></div><div class="c c3"></div><div class="c c4 r">2</div><div class="c c5 r">0:02</div><div class="c c6 r">22050</div><div class="c c7 r">64</div><div class="c c8"><i style="letter-spacing:0.374px">/usr/share/lmms/samples/beats/</i><span style="letter-spacing:0.169px">electro_beat02.ogg</span></div></div>
<div class="row" style="top:335px"><div class="c c0"><svg class="st" viewBox="0 0 16 16"><path d="M8 1.3l2.05 4.6 4.95.5-3.7 3.35 1.05 4.9L8 12.1l-4.35 2.55 1.05-4.9L1 6.4l4.95-.5z" fill="none" stroke="#747474" stroke-width="1.150" stroke-linejoin="miter"/></svg></div><div class="c c1" style="letter-spacing:-0.146px">house_loop01.ogg</div><div class="c c2"></div><div class="c c3"></div><div class="c c4 r">2</div><div class="c c5 r">0:01</div><div class="c c6 r">44100</div><div class="c c7 r">84</div><div class="c c8"><i style="letter-spacing:0.374px">/usr/share/lmms/samples/beats/</i><span style="letter-spacing:-0.146px">house_loop01.ogg</span></div></div>
<div class="row" style="top:361px"><div class="c c0"><svg class="st" viewBox="0 0 16 16"><path d="M8 1.3l2.05 4.6 4.95.5-3.7 3.35 1.05 4.9L8 12.1l-4.35 2.55 1.05-4.9L1 6.4l4.95-.5z" fill="none" stroke="#747474" stroke-width="1.150" stroke-linejoin="miter"/></svg></div><div class="c c1" style="letter-spacing:-0.022px">jungle01.ogg</div><div class="c c2"></div><div class="c c3"></div><div class="c c4 r">2</div><div class="c c5 r">0:02</div><div class="c c6 r">44100</div><div class="c c7 r">86</div><div class="c c8"><i style="letter-spacing:0.374px">/usr/share/lmms/samples/beats/</i><span style="letter-spacing:-0.022px">jungle01.ogg</span></div></div>
<div class="row" style="top:387px"><div class="c c0"><svg class="st" viewBox="0 0 16 16"><path d="M8 1.3l2.05 4.6 4.95.5-3.7 3.35 1.05 4.9L8 12.1l-4.35 2.55 1.05-4.9L1 6.4l4.95-.5z" fill="none" stroke="#747474" stroke-width="1.150" stroke-linejoin="miter"/></svg></div><div class="c c1" style="letter-spacing:0.008px">rave_hihat01.ogg</div><div class="c c2"></div><div class="c c3"></div><div class="c c4 r">1</div><div class="c c5 r">0:02</div><div class="c c6 r">22050</div><div class="c c7 r">60</div><div class="c c8"><i style="letter-spacing:0.374px">/usr/share/lmms/samples/beats/</i><span style="letter-spacing:0.008px">rave_hihat01.ogg</span></div></div>
<div class="row" style="top:413px"><div class="c c0"><svg class="st" viewBox="0 0 16 16"><path d="M8 1.3l2.05 4.6 4.95.5-3.7 3.35 1.05 4.9L8 12.1l-4.35 2.55 1.05-4.9L1 6.4l4.95-.5z" fill="none" stroke="#747474" stroke-width="1.150" stroke-linejoin="miter"/></svg></div><div class="c c1" style="letter-spacing:0.133px">rave_hihat02.ogg</div><div class="c c2"></div><div class="c c3"></div><div class="c c4 r">1</div><div class="c c5 r">0:02</div><div class="c c6 r">22050</div><div class="c c7 r">53</div><div class="c c8"><i style="letter-spacing:0.374px">/usr/share/lmms/samples/beats/</i><span style="letter-spacing:0.133px">rave_hihat02.ogg</span></div></div>
<div class="row" style="top:439px"><div class="c c0"><svg class="st" viewBox="0 0 16 16"><path d="M8 1.3l2.05 4.6 4.95.5-3.7 3.35 1.05 4.9L8 12.1l-4.35 2.55 1.05-4.9L1 6.4l4.95-.5z" fill="none" stroke="#747474" stroke-width="1.150" stroke-linejoin="miter"/></svg></div><div class="c c1" style="letter-spacing:-0.106px">rave_kick01.ogg</div><div class="c c2"></div><div class="c c3"></div><div class="c c4 r">1</div><div class="c c5 r">0:02</div><div class="c c6 r">22050</div><div class="c c7 r">55</div><div class="c c8"><i style="letter-spacing:0.374px">/usr/share/lmms/samples/beats/</i><span style="letter-spacing:-0.106px">rave_kick01.ogg</span></div></div>
<div class="row" style="top:465px"><div class="c c0"><svg class="st" viewBox="0 0 16 16"><path d="M8 1.3l2.05 4.6 4.95.5-3.7 3.35 1.05 4.9L8 12.1l-4.35 2.55 1.05-4.9L1 6.4l4.95-.5z" fill="none" stroke="#747474" stroke-width="1.150" stroke-linejoin="miter"/></svg></div><div class="c c1" style="letter-spacing:0.027px">rave_kick02.ogg</div><div class="c c2"></div><div class="c c3"></div><div class="c c4 r">1</div><div class="c c5 r">0:02</div><div class="c c6 r">22050</div><div class="c c7 r">48</div><div class="c c8"><i style="letter-spacing:0.374px">/usr/share/lmms/samples/beats/</i><span style="letter-spacing:0.027px">rave_kick02.ogg</span></div></div>
<div class="row" style="top:491px"><div class="c c0"><svg class="st" viewBox="0 0 16 16"><path d="M8 1.3l2.05 4.6 4.95.5-3.7 3.35 1.05 4.9L8 12.1l-4.35 2.55 1.05-4.9L1 6.4l4.95-.5z" fill="none" stroke="#747474" stroke-width="1.150" stroke-linejoin="miter"/></svg></div><div class="c c1" style="letter-spacing:-0.069px">rave_snare01.ogg</div><div class="c c2"></div><div class="c c3"></div><div class="c c4 r">1</div><div class="c c5 r">0:02</div><div class="c c6 r">22050</div><div class="c c7 r">53</div><div class="c c8"><i style="letter-spacing:0.374px">/usr/share/lmms/samples/beats/</i><span style="letter-spacing:-0.069px">rave_snare01.ogg</span></div></div>
<div class="row" style="top:517px"><div class="c c0"><svg class="st" viewBox="0 0 16 16"><path d="M8 1.3l2.05 4.6 4.95.5-3.7 3.35 1.05 4.9L8 12.1l-4.35 2.55 1.05-4.9L1 6.4l4.95-.5z" fill="none" stroke="#747474" stroke-width="1.150" stroke-linejoin="miter"/></svg></div><div class="c c1" style="letter-spacing:-0.008px">bassdrum01.ogg</div><div class="c c2"></div><div class="c c3"></div><div class="c c4 r">2</div><div class="c c5 r">0:00</div><div class="c c6 r">44100</div><div class="c c7 r">102</div><div class="c c8"><i style="letter-spacing:0.423px">/usr/share/lmms/samples/drums/</i><span style="letter-spacing:-0.008px">bassdrum01.ogg</span></div></div>
<div class="row" style="top:543px"><div class="c c0"><svg class="st" viewBox="0 0 16 16"><path d="M8 1.3l2.05 4.6 4.95.5-3.7 3.35 1.05 4.9L8 12.1l-4.35 2.55 1.05-4.9L1 6.4l4.95-.5z" fill="none" stroke="#747474" stroke-width="1.150" stroke-linejoin="miter"/></svg></div><div class="c c1" style="letter-spacing:0.149px">bassdrum02.ogg</div><div class="c c2"></div><div class="c c3"></div><div class="c c4 r">2</div><div class="c c5 r">0:00</div><div class="c c6 r">44100</div><div class="c c7 r">64</div><div class="c c8"><i style="letter-spacing:0.423px">/usr/share/lmms/samples/drums/</i><span style="letter-spacing:0.149px">bassdrum02.ogg</span></div></div>
<div class="row" style="top:569px"><div class="c c0"><svg class="st" viewBox="0 0 16 16"><path d="M8 1.3l2.05 4.6 4.95.5-3.7 3.35 1.05 4.9L8 12.1l-4.35 2.55 1.05-4.9L1 6.4l4.95-.5z" fill="none" stroke="#747474" stroke-width="1.150" stroke-linejoin="miter"/></svg></div><div class="c c1" style="letter-spacing:0.149px">bassdrum03.ogg</div><div class="c c2"></div><div class="c c3"></div><div class="c c4 r">2</div><div class="c c5 r">0:00</div><div class="c c6 r">44100</div><div class="c c7 r">74</div><div class="c c8"><i style="letter-spacing:0.423px">/usr/share/lmms/samples/drums/</i><span style="letter-spacing:0.149px">bassdrum03.ogg</span></div></div>
<div class="row" style="top:595px"><div class="c c0"><svg class="st" viewBox="0 0 16 16"><path d="M8 1.3l2.05 4.6 4.95.5-3.7 3.35 1.05 4.9L8 12.1l-4.35 2.55 1.05-4.9L1 6.4l4.95-.5z" fill="none" stroke="#747474" stroke-width="1.150" stroke-linejoin="miter"/></svg></div><div class="c c1" style="letter-spacing:0.235px">bassdrum04.ogg</div><div class="c c2"></div><div class="c c3"></div><div class="c c4 r">2</div><div class="c c5 r">0:00</div><div class="c c6 r">44100</div><div class="c c7 r">92</div><div class="c c8"><i style="letter-spacing:0.423px">/usr/share/lmms/samples/drums/</i><span style="letter-spacing:0.235px">bassdrum04.ogg</span></div></div>
<div class="row" style="top:621px"><div class="c c0"><svg class="st" viewBox="0 0 16 16"><path d="M8 1.3l2.05 4.6 4.95.5-3.7 3.35 1.05 4.9L8 12.1l-4.35 2.55 1.05-4.9L1 6.4l4.95-.5z" fill="none" stroke="#747474" stroke-width="1.150" stroke-linejoin="miter"/></svg></div><div class="c c1" style="letter-spacing:-0.017px">bassdrum_acoustic01.ogg</div><div class="c c2"></div><div class="c c3"></div><div class="c c4 r">2</div><div class="c c5 r">0:00</div><div class="c c6 r">44100</div><div class="c c7 r">134</div><div class="c c8"><i style="letter-spacing:0.423px">/usr/share/lmms/samples/drums/</i><span style="letter-spacing:-0.017px">bassdrum_acoustic01.ogg</span></div></div>
<div class="row" style="top:647px"><div class="c c0"><svg class="st" viewBox="0 0 16 16"><path d="M8 1.3l2.05 4.6 4.95.5-3.7 3.35 1.05 4.9L8 12.1l-4.35 2.55 1.05-4.9L1 6.4l4.95-.5z" fill="none" stroke="#747474" stroke-width="1.150" stroke-linejoin="miter"/></svg></div><div class="c c1" style="letter-spacing:0.075px">bassdrum_acoustic02.ogg</div><div class="c c2"></div><div class="c c3"></div><div class="c c4 r">1</div><div class="c c5 r">0:02</div><div class="c c6 r">44100</div><div class="c c7 r">47</div><div class="c c8"><i style="letter-spacing:0.423px">/usr/share/lmms/samples/drums/</i><span style="letter-spacing:0.075px">bassdrum_acoustic02.ogg</span></div></div>
<div class="row" style="top:673px"><div class="c c0"><svg class="st" viewBox="0 0 16 16"><path d="M8 1.3l2.05 4.6 4.95.5-3.7 3.35 1.05 4.9L8 12.1l-4.35 2.55 1.05-4.9L1 6.4l4.95-.5z" fill="none" stroke="#747474" stroke-width="1.150" stroke-linejoin="miter"/></svg></div><div class="c c1" style="letter-spacing:-0.065px">clap01.ogg</div><div class="c c2"></div><div class="c c3"></div><div class="c c4 r">2</div><div class="c c5 r">0:00</div><div class="c c6 r">44100</div><div class="c c7 r">97</div><div class="c c8"><i style="letter-spacing:0.423px">/usr/share/lmms/samples/drums/</i><span style="letter-spacing:-0.065px">clap01.ogg</span></div></div>
<div class="row" style="top:699px"><div class="c c0"><svg class="st" viewBox="0 0 16 16"><path d="M8 1.3l2.05 4.6 4.95.5-3.7 3.35 1.05 4.9L8 12.1l-4.35 2.55 1.05-4.9L1 6.4l4.95-.5z" fill="none" stroke="#747474" stroke-width="1.150" stroke-linejoin="miter"/></svg></div><div class="c c1" style="letter-spacing:0.135px">clap02.ogg</div><div class="c c2"></div><div class="c c3"></div><div class="c c4 r">2</div><div class="c c5 r">0:00</div><div class="c c6 r">44100</div><div class="c c7 r">106</div><div class="c c8"><i style="letter-spacing:0.423px">/usr/share/lmms/samples/drums/</i><span style="letter-spacing:0.135px">clap02.ogg</span></div></div>
<div class="row" style="top:725px"><div class="c c0"><svg class="st" viewBox="0 0 16 16"><path d="M8 1.3l2.05 4.6 4.95.5-3.7 3.35 1.05 4.9L8 12.1l-4.35 2.55 1.05-4.9L1 6.4l4.95-.5z" fill="none" stroke="#747474" stroke-width="1.150" stroke-linejoin="miter"/></svg></div><div class="c c1" style="letter-spacing:0.135px">clap03.ogg</div><div class="c c2"></div><div class="c c3"></div><div class="c c4 r">2</div><div class="c c5 r">0:00</div><div class="c c6 r">44100</div><div class="c c7 r">95</div><div class="c c8"><i style="letter-spacing:0.423px">/usr/share/lmms/samples/drums/</i><span style="letter-spacing:0.135px">clap03.ogg</span></div></div>
<div class="row" style="top:751px"><div class="c c0"><svg class="st" viewBox="0 0 16 16"><path d="M8 1.3l2.05 4.6 4.95.5-3.7 3.35 1.05 4.9L8 12.1l-4.35 2.55 1.05-4.9L1 6.4l4.95-.5z" fill="none" stroke="#747474" stroke-width="1.150" stroke-linejoin="miter"/></svg></div><div class="c c1" style="letter-spacing:0.235px">clap04.ogg</div><div class="c c2"></div><div class="c c3"></div><div class="c c4 r">2</div><div class="c c5 r">0:00</div><div class="c c6 r">44100</div><div class="c c7 r">90</div><div class="c c8"><i style="letter-spacing:0.423px">/usr/share/lmms/samples/drums/</i><span style="letter-spacing:0.235px">clap04.ogg</span></div></div>
    </div>
    <div id="thead">
      <div class="h c0"><svg class="st" style="height:17px" viewBox="0 0 16 17"><path d="M8 0.200l2.450 5.350 5.550.6-4.100 3.900 1.150 5.750L8 12.900l-5.050 2.900 1.150-5.750L0 6.150l5.550-.6z" fill="#787878"/></svg></div>
      <div class="h c1">Filename</div><div class="h c2">Sample Pack</div><div class="h c3">Type</div>
      <div class="h c4 r" style="padding-right:1px">Channels</div><div class="h c5 r" style="padding-right:6px">Length</div><div class="h c6 r">Sample Rate</div><div class="h c7 r" style="letter-spacing:0.3px">Bitrate</div><div class="h c8">Path</div>
    </div>
  </div>
</div>
<div id="status"><span id="stopped">Stopped</span>
<svg id="logo" viewBox="0 0 26 24" width="26" height="24"><defs><radialGradient id="hg" gradientUnits="userSpaceOnUse" cx="14.500" cy="12" r="11.500"><stop offset="0" stop-color="#ff9624"/><stop offset="0.450" stop-color="#ffab33"/><stop offset="1" stop-color="#ffd452"/></radialGradient></defs><path d="M12.25 6.00L15.18 0.85L21.03 0.85L23.95 6.00L21.03 11.15L15.18 11.15ZM2.15 12.00L5.08 6.85L10.93 6.85L13.85 12.00L10.93 17.15L5.08 17.15ZM12.25 17.60L15.18 12.45L21.03 12.45L23.95 17.60L21.03 22.75L15.18 22.75Z" fill="url(#hg)"/></svg>
<span id="ver">SampleHive v0.9.0_alpha.1</span>
<svg id="grip" viewBox="0 0 20 20" width="20" height="20"><path d="M18 0.8L-1.2 20M18 5.6L3.6 20M18 10.4L8.4 20M18 15.2L13.2 20" stroke="#3f3f3f" stroke-width="0.800" fill="none"/><path d="M19 1.0L0.0 20M19 5.8L4.8 20M19 10.6L9.6 20M19 15.4L14.4 20" stroke="#242424" stroke-width="1.300" fill="none"/></svg>
</div>
</body></html>
